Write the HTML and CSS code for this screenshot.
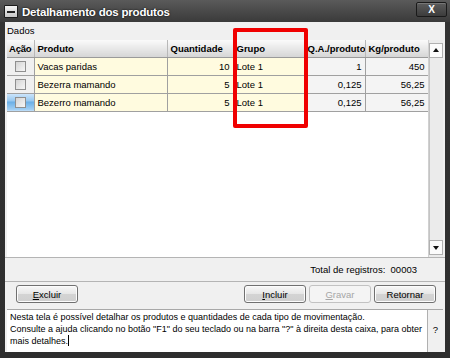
FILE: index.html
```html
<!DOCTYPE html>
<html>

<head>
    <meta charset='utf-8'>
    <title>Detalhamento dos produtos</title>
    <meta name='viewport' content='width=device-width, initial-scale=1'>
    <link rel="stylesheet" href="styles.css">
</head>

<body>
    <div class="window">
        <div class="titlebar">
            <span class="sysicon"><span></span></span>
            <span class="title">Detalhamento dos produtos</span>
            <span class="close">X</span>
        </div>
        <div class="content">
            <div class="label">Dados</div>
            <div class="gridbox">
                <div class="grid">
                    <table>
                        <colgroup>
                            <col style="width: 27px">
                            <col style="width: 133px">
                            <col style="width: 66px">
                            <col style="width: 71px">
                            <col style="width: 61px">
                            <col style="width: 63px">
                        </colgroup>
                        <thead>
                            <tr>
                                <th class="first">Ação</th>
                                <th>Produto</th>
                                <th>Quantidade</th>
                                <th>Grupo</th>
                                <th>Q.A./produto</th>
                                <th>Kg/produto</th>
                            </tr>
                        </thead>
                        <tbody>
                            <tr>
                                <td class="acao"><span class="check"></span></td>
                                <td class="edit">Vacas paridas</td>
                                <td class="edit num">10</td>
                                <td class="edit">Lote 1</td>
                                <td class="ro num">1</td>
                                <td class="ro num">450</td>
                            </tr>
                            <tr>
                                <td class="acao"><span class="check"></span></td>
                                <td class="edit">Bezerra mamando</td>
                                <td class="edit num">5</td>
                                <td class="edit">Lote 1</td>
                                <td class="ro num">0,125</td>
                                <td class="ro num">56,25</td>
                            </tr>
                            <tr>
                                <td class="acao current"><span class="check"></span></td>
                                <td class="edit">Bezerro mamando</td>
                                <td class="edit num">5</td>
                                <td class="edit">Lote 1</td>
                                <td class="ro num">0,125</td>
                                <td class="ro num">56,25</td>
                            </tr>
                        </tbody>
                    </table>
                </div>
                <div class="scrollbar">
                    <span class="arrow up"></span>
                    <span class="track"></span>
                    <span class="arrow down"></span>
                </div>
            </div>
            <div class="total">Total de registros:&nbsp; 00003</div>
            <div class="buttons">
                <button class="btn"><u>E</u>xcluir</button>
                <span class="spacer"></span>
                <button class="btn"><u>I</u>ncluir</button>
                <button class="btn" disabled><u>G</u>ravar</button>
                <button class="btn">Retornar</button>
            </div>
            <div class="message">
                <div class="msgtext">Nesta tela é possível detalhar os produtos e quantidades de cada tipo de movimentação.<br>Consulte a ajuda clicando no botão "F1" do seu teclado ou na barra "?" à direita desta caixa, para obter<br>mais detalhes.<span class="caret"></span></div>
                <div class="help">?</div>
            </div>
        </div>
        <div class="highlight"></div>
    </div>
</body>

</html>
```

FILE: styles.css
```css
body,
html {
    margin: 0;
    padding: 0;
    width: 450px;
    height: 358px;
    overflow: hidden;
    background: #2b2b2b;
}

.window {
    position: relative;
    width: 450px;
    height: 358px;
    box-sizing: border-box;
    padding: 0 5px 6px 5px;
    background: linear-gradient(#5a5a5a, #3a3a3a 22px, #333 22px, #2e2e2e);
    font-family: "Liberation Sans", Arial, sans-serif;
    font-size: 9.5px;
    color: #000;
    display: flex;
    flex-direction: column;
}

/* title bar */
.titlebar {
    height: 22px;
    display: flex;
    align-items: center;
    gap: 4px;
}

.sysicon {
    width: 12px;
    height: 11px;
    margin-left: -1px;
    margin-top: 1px;
    background: linear-gradient(#f4f4f4, #c8c8c8);
    border: 1px solid #1c1c1c;
    border-radius: 1px;
    display: flex;
    align-items: center;
    justify-content: center;
}

.sysicon span {
    width: 8px;
    height: 2px;
    background: #222;
}

.title {
    color: #fff;
    font-size: 11.5px;
    font-weight: bold;
    letter-spacing: -0.2px;
    text-shadow: 0 0 2px #000;
    margin-top: 1px;
}

.close {
    margin-left: auto;
    margin-right: -2px;
    margin-top: -3px;
    width: 31px;
    height: 15px;
    box-sizing: border-box;
    border: 1px solid #1a1a1a;
    border-radius: 2px;
    box-shadow: inset 0 1px 0 #777;
    background: linear-gradient(#5c5c5c, #3c3c3c);
    color: #fff;
    font-size: 10px;
    font-weight: bold;
    text-align: center;
    line-height: 13px;
}

/* content */
.content {
    flex: 1;
    background: #f0f0f0;
    display: flex;
    flex-direction: column;
}

.label {
    height: 18px;
    line-height: 14px;
    padding: 2px 0 0 2px;
    box-sizing: border-box;
}

.gridbox {
    height: 217px;
    display: flex;
    padding-left: 2px;
}

.grid {
    width: 421px;
    background: #fff;
}

table {
    border-collapse: collapse;
    table-layout: fixed;
    width: 421px;
}

th {
    height: 17px;
    padding: 0 3px;
    text-align: left;
    font-weight: bold;
    background: linear-gradient(#fafafa, #e4e4e4 60%, #d6d6d6);
    border-right: 1px solid #b8b8b8;
    border-bottom: 1px solid #9a9a9a;
    white-space: nowrap;
    overflow: hidden;
    box-sizing: border-box;
}

th.first {
    padding: 0 0 0 2px;
    letter-spacing: -0.2px;
}

td {
    height: 18px;
    padding: 0 3px;
    border-right: 1px solid #a0a0a0;
    border-bottom: 1px solid #a0a0a0;
    white-space: nowrap;
    overflow: hidden;
    box-sizing: border-box;
}

.num {
    text-align: right;
}

.edit {
    background: #fffbdf;
}

.ro {
    background: #f4f4f4;
}

.acao {
    background: #f0f0f0;
    text-align: center;
    padding: 0;
}

.acao.current {
    background: linear-gradient(#cfe6fb, #8ec3ee 50%, #6aafe6 50%, #a9d3f5);
}

.check {
    display: inline-block;
    width: 9px;
    height: 9px;
    vertical-align: middle;
    border: 1px solid #8f8f8f;
    background: linear-gradient(135deg, #d4d4d4, #f6f6f6);
}

.scrollbar {
    width: 15px;
    display: flex;
    flex-direction: column;
    background: #ebebeb;
    border-left: 1px solid #d0d0d0;
    box-sizing: border-box;
}

.track {
    flex: 1;
    border-left: 1px solid #c4c4c4;
}

.arrow {
    height: 13px;
    margin: 3px 0 0 0;
    background: #fbfbfb;
    border: 1px solid #b0b0b0;
    position: relative;
}

.arrow.down {
    margin: 0 0 2px 0;
}

.arrow::after {
    content: "";
    position: absolute;
    left: 3px;
    top: 4px;
    border-left: 3.5px solid transparent;
    border-right: 3.5px solid transparent;
}

.arrow.up::after {
    border-bottom: 4px solid #111;
}

.arrow.down::after {
    top: 5px;
    border-top: 4px solid #111;
}

.total {
    height: 25px;
    box-sizing: border-box;
    border-top: 1px solid #b4b4b4;
    border-bottom: 1px solid #b4b4b4;
    text-align: right;
    padding-right: 28px;
    line-height: 23px;
    font-size: 9.5px;
}

.buttons {
    height: 27px;
    display: flex;
    align-items: flex-start;
    padding: 3px 9px 0 11px;
    box-sizing: border-box;
    gap: 3px;
}

.spacer {
    flex: 1;
}

.btn {
    width: 62px;
    height: 18px;
    padding: 0;
    font-family: "Liberation Sans", Arial, sans-serif;
    font-size: 9.5px;
    color: #000;
    border: 1px solid #707070;
    border-radius: 3px;
    background: linear-gradient(#f8f8f8, #e6e6e6 50%, #d4d4d4 50%, #cfcfcf);
    box-shadow: inset 0 0 0 1px #fcfcfc;
}

.btn[disabled] {
    color: #a6a6a6;
    border-color: #c2c2c2;
    background: #f4f4f4;
    box-shadow: none;
}

.message {
    flex: 1;
    display: flex;
    margin: 0 2px 0 2px;
    border-top: 1px solid #a8a8a8;
}

.msgtext {
    flex: 1;
    background: #fff;
    padding: 1px 3px;
    line-height: 12px;
    font-size: 9px;
    white-space: nowrap;
}

.caret {
    display: inline-block;
    width: 1px;
    height: 11px;
    background: #000;
    vertical-align: -2px;
}

.help {
    width: 15px;
    border-left: 1px solid #b0b0b0;
    text-align: center;
    line-height: 40px;
    font-size: 9.5px;
}

/* red selection mark over the Grupo column */
.highlight {
    position: absolute;
    left: 233px;
    top: 28px;
    width: 75px;
    height: 100px;
    box-sizing: border-box;
    border: 4px solid #f00000;
    border-radius: 2px;
}
```
